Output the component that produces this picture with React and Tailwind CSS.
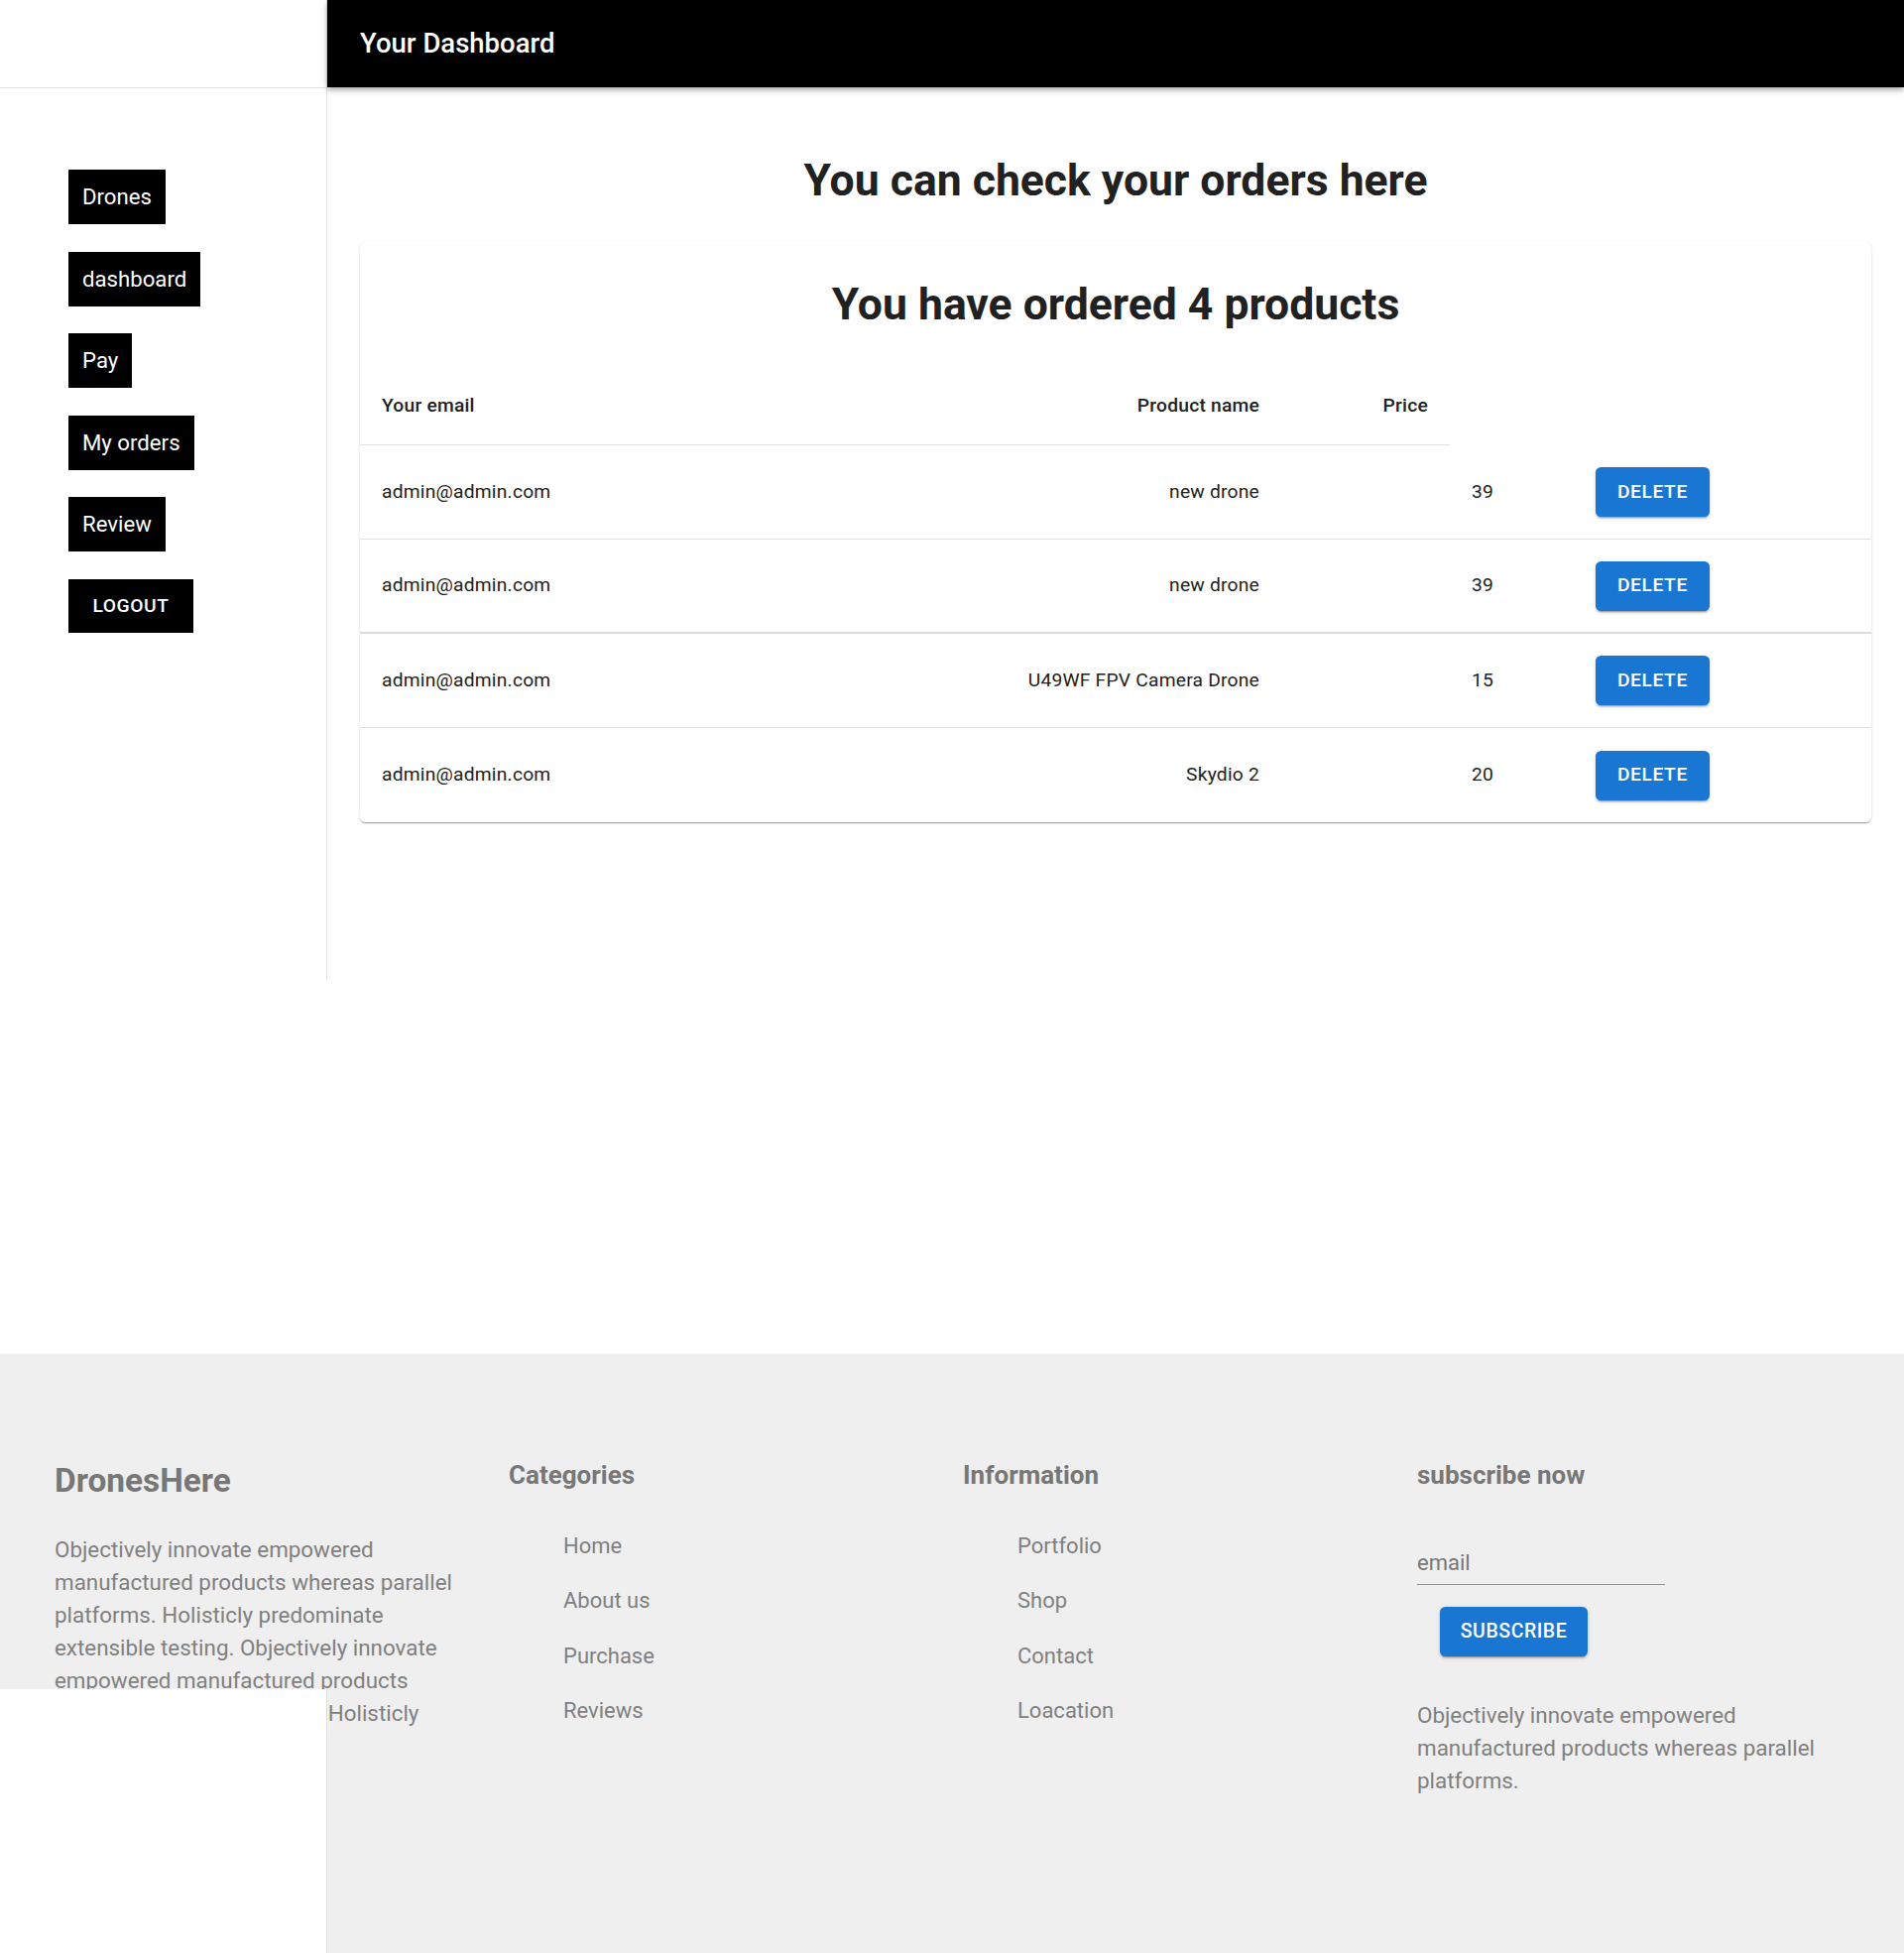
// App.jsx - orders dashboard
const orders = [
    { id: 1, email: 'admin@admin.com', name: 'new drone', price: 39 },
    { id: 2, email: 'admin@admin.com', name: 'new drone', price: 39 },
    { id: 3, email: 'admin@admin.com', name: 'U49WF FPV Camera Drone', price: 15 },
    { id: 4, email: 'admin@admin.com', name: 'Skydio 2', price: 20 },
];

const navItems = ['Drones', 'dashboard', 'Pay', 'My orders', 'Review'];

const btnShadow = 'shadow-[0px_3px_1px_-2px_rgba(0,0,0,0.2),0px_2px_2px_0px_rgba(0,0,0,0.14),0px_1px_5px_0px_rgba(0,0,0,0.12)]';

const Sidebar = () => (
    <aside className="w-[330px] h-[988px] shrink-0 bg-white border-r border-[#e0e0e0]">
        <div className="h-[89px] border-b border-[#e0e0e0]"></div>
        <div className="flex flex-col items-start gap-[27.5px] pl-[69px] pt-[82px]">
            {navItems.map(item => (
                <button
                    key={item}
                    className="h-[55px] px-[14px] bg-black text-white text-[22.2px] leading-none"
                >
                    {item}
                </button>
            ))}
            <button className="h-[54px] w-[126px] bg-black text-white text-[19.25px] font-medium uppercase tracking-[0.02857em] leading-none">
                Logout
            </button>
        </div>
    </aside>
);

const OrdersTable = () => (
    <div className="bg-white rounded-[5.5px] shadow-[0px_2px_1px_-1px_rgba(0,0,0,0.2),0px_1px_1px_0px_rgba(0,0,0,0.14),0px_1px_3px_0px_rgba(0,0,0,0.12)] pt-[37px]">
        <h3 className="text-[44.5px] font-bold leading-[53px] text-center text-[#212121]">
            You have ordered {orders.length} products
        </h3>

        {/* cabecera */}
        <div className="mt-[37px] grid grid-cols-[500px_429px_170px] w-[1099px] h-[78px] items-center border-b border-[#e0e0e0] text-[19.25px] font-medium text-[#212121] tracking-[0.01071em]">
            <div className="pl-[22px]">Your email</div>
            <div className="pr-[22px] text-right">Product name</div>
            <div className="pr-[22px] text-right">Price</div>
        </div>

        {orders.map((o, i) => (
            <div
                key={o.id}
                className={`grid grid-cols-[500px_429px_170px_125px_1fr] h-[95px] items-center text-[19.25px] text-[#212121] tracking-[0.01071em] ${i === 1 ? 'border-b-2 border-[#dcdcdc]' : i < orders.length - 1 ? 'border-b border-[#e0e0e0]' : ''}`}
            >
                <div className="pl-[22px]">{o.email}</div>
                <div className="pr-[22px] text-right">{o.name}</div>
                <div></div>
                <div className="pl-[22px]">{o.price}</div>
                <div className="pl-[22px]">
                    <button className={`h-[50px] px-[22px] rounded-[5.5px] bg-[#1976d2] text-white text-[19.25px] font-medium uppercase tracking-[0.02857em] ${btnShadow}`}>
                        Delete
                    </button>
                </div>
            </div>
        ))}
    </div>
);

const Footer = () => (
    <footer className="h-[604px] bg-[#efefef] text-[#808080]">
        <div className="grid grid-cols-[458px_458px_458px_458px] pl-[55px] items-start">
            <div className="pt-[108px]">
                <h2 className="text-[33.4px] font-bold leading-[40px] text-[#777777]">DronesHere</h2>
                <p className="mt-[32.5px] w-[425px] text-[22.4px] leading-[33px]">
                    Objectively innovate empowered manufactured products whereas parallel platforms. Holisticly predominate extensible testing. Objectively innovate empowered manufactured products whereas parallel platforms. Holisticly
                </p>
            </div>
            <div className="pt-[102.5px]">
                <h3 className="text-[26px] font-bold leading-[39px] text-[#777777]">Categories</h3>
                <ul className="mt-[35px] pl-[55px] flex flex-col gap-[22.5px] text-[22px] leading-[33px]">
                    <li>Home</li>
                    <li>About us</li>
                    <li>Purchase</li>
                    <li>Reviews</li>
                </ul>
            </div>
            <div className="pt-[102.5px]">
                <h3 className="text-[26px] font-bold leading-[39px] text-[#777777]">Information</h3>
                <ul className="mt-[35px] pl-[55px] flex flex-col gap-[22.5px] text-[22px] leading-[33px]">
                    <li>Portfolio</li>
                    <li>Shop</li>
                    <li>Contact</li>
                    <li>Loacation</li>
                </ul>
            </div>
            <div className="pt-[102.5px]">
                <h3 className="text-[26px] font-bold leading-[39px] text-[#777777]">subscribe now</h3>
                <div className="mt-[52px] w-[250px] pb-[5px] border-b border-[#8f8f8f] text-[22px] leading-[33px] text-[#777777]">
                    email
                </div>
                <button className={`mt-[22px] ml-[23px] h-[50px] w-[149px] rounded-[5.5px] bg-[#1976d2] text-white text-[19.5px] font-medium uppercase tracking-[0.02857em] ${btnShadow}`}>
                    Subscribe
                </button>
                <p className="mt-[43.5px] w-[425px] text-[22.4px] leading-[33px]">
                    Objectively innovate empowered manufactured products whereas parallel platforms.
                </p>
            </div>
        </div>
    </footer>
);

export default function App() {
    return (
        <div className="relative min-h-[1969px] bg-white font-['Roboto',sans-serif]">
            <div className="flex items-start">
                <Sidebar />
                <main className="flex-1 h-[1365px]">
                    <header className="h-[88px] bg-black flex items-center px-[33px] shadow-[0px_2px_4px_-1px_rgba(0,0,0,0.2),0px_4px_5px_0px_rgba(0,0,0,0.14),0px_1px_10px_0px_rgba(0,0,0,0.12)]">
                        <h1 className="text-white text-[27.5px] font-medium">Your Dashboard</h1>
                    </header>
                    <div className="px-[33px] pt-[68px]">
                        <h2 className="text-[44.5px] font-bold leading-[53px] text-center text-[#212121]">
                            You can check your orders here
                        </h2>
                        <div className="mt-[35px]">
                            <OrdersTable />
                        </div>
                    </div>
                </main>
            </div>
            <Footer />
            {/* panel lateral repetido sobre el pie */}
            <div className="absolute left-0 top-[1703px] w-[330px] h-[266px] bg-white border-r border-[#e0e0e0]"></div>
        </div>
    );
}
